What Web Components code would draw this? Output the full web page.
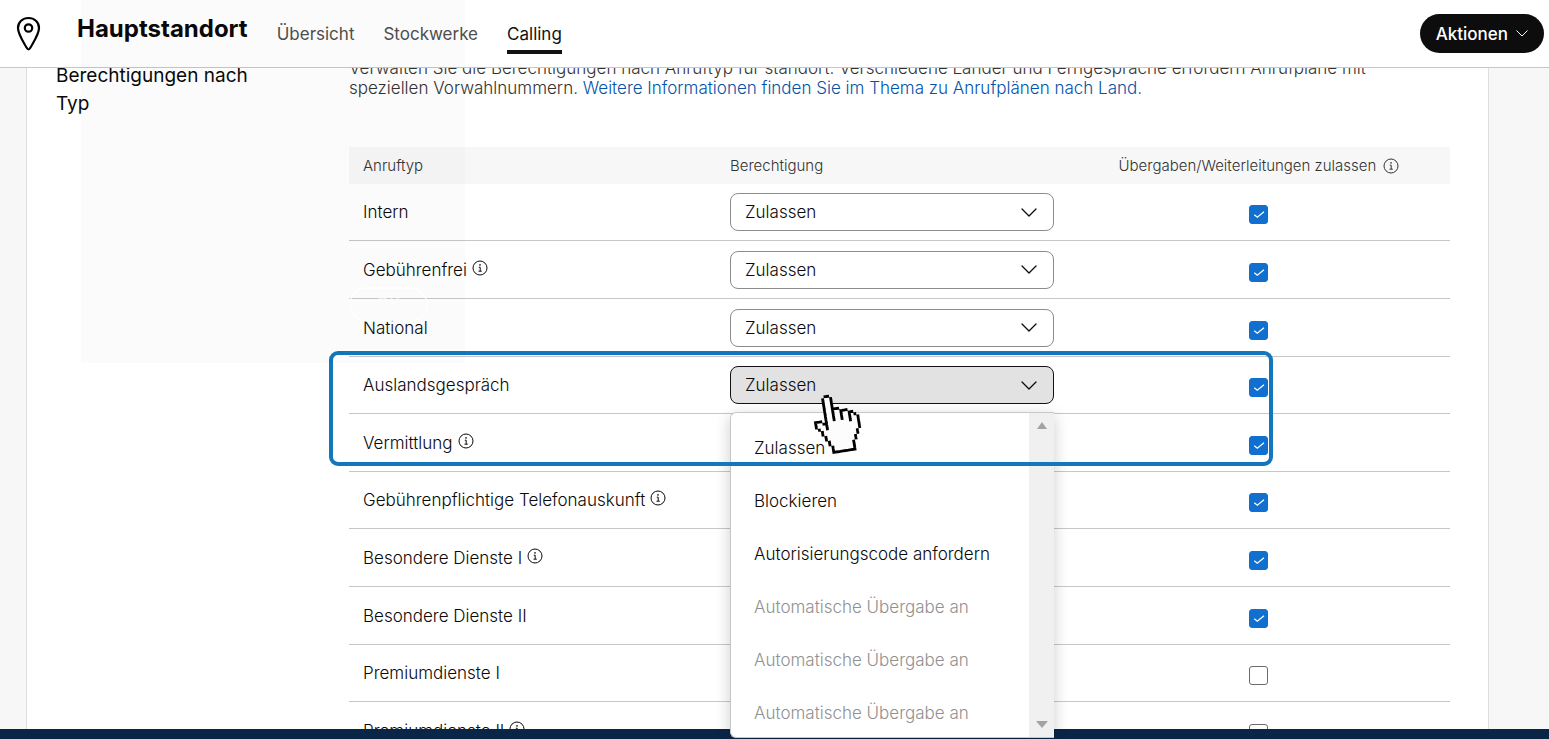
<!DOCTYPE html>
<html lang="de">
<head>
<meta charset="utf-8">
<title>Hauptstandort – Calling</title>
<style>
  html, body { margin: 0; height: 100%; }
  body { font-family: Inter, "Liberation Sans", sans-serif; font-size: 17px; font-weight: 300; color: #0a0a0a; background: #f7f7f7; overflow: hidden; }
</style>
</head>
<body>
<calling-page></calling-page>

<script>
function define(name, html, setup) {
  const tpl = document.createElement('template');
  tpl.innerHTML = html;
  customElements.define(name, class extends HTMLElement {
    connectedCallback() {
      if (this.shadowRoot) return;
      this.attachShadow({ mode: 'open' }).append(tpl.content.cloneNode(true));
      if (setup) setup(this, this.shadowRoot);
    }
  });
}

define('info-icon', `
<style>:host { display: inline-block; width: 16px; height: 16px; } svg { display: block; }</style>
<svg width="16" height="16" viewBox="0 0 16 16" fill="none" stroke="currentColor" aria-hidden="true">
  <circle cx="8" cy="8" r="7"/><path d="M6.8 7.2H8.2V11M6.5 11.2H9.8"/><circle cx="8" cy="4.9" r=".8" fill="currentColor" stroke="none"/>
</svg>`);

define('chevron-icon', `
<style>:host { display: inline-block; } svg { display: block; width: 100%; }</style>
<svg viewBox="0 0 16 9" fill="none" stroke="currentColor" stroke-width="1.3" stroke-linecap="round" stroke-linejoin="round" aria-hidden="true"><path d="M1 1L8 8L15 1"/></svg>`);

define('hand-cursor', `
<style>:host { display: block; width: 56px; height: 65px; } svg { display: block; }</style>
<svg width="56" height="65" viewBox="-2 -1 20.8 24.2" aria-hidden="true"><g transform="rotate(-9 8.5 11)"></g></svg>`,
(el, root) => {
  const rows = [
    '.....XX', '....XooX', '....XooX', '....XooX', '....XooX', '....XooXXX', '....XooXooXXX', '....XooXooXooXX',
    '....XooXooXooXoX', 'XXX.XooXooXooXooX', 'XooXXooooooooXooX', 'XoooXoooooooooooX', '.XooXoooooooooooX',
    '..XoooooooooooooX', '..XooooooooooooX', '...XoooooooooooX', '...XooooooooooX', '....XoooooooooX',
    '....XooooooooX', '.....XoooooooX', '.....XoooooooX', '.....XXXXXXXXX'];
  const g = root.querySelector('g');
  let dark = '', light = '';
  rows.forEach((r, y) => [...r].forEach((c, x) => {
    const cell = 'M' + x + ' ' + y + 'h1.05v1.05h-1.05z';
    if (c === 'X') dark += cell;
    if (c === 'o') light += cell;
  }));
  g.innerHTML = '<path fill="#fcfcfc" d="' + light + '"/><path fill="#000" d="' + dark + '"/>';
});

define('nav-tab', `
<style>
  :host { display: block; font-weight: 400; }
  a { display: block; color: #4f4f4f; text-decoration: none; line-height: 24px; padding-bottom: 4px; border-bottom: 4px solid transparent; }
  :host([active]) a { color: #121212; border-color: #121212; }
</style>
<a href="#"><slot></slot></a>`);

define('page-header', `
<style>
  :host { display: flex; align-items: center; height: 67px; flex: none; box-sizing: content-box; padding: 0 5px 0 16px; background: #fff; border-bottom: 1px solid #c7c7c7; position: relative; z-index: 3; }
  .pin { display: block; width: 26px; height: 36px; margin-right: 35px; }
  h1 { margin: 0 29px 10px 0; font-size: 24px; line-height: 32px; font-weight: 700; }
  nav { display: flex; gap: 29px; flex: 1; padding-top: 8px; }
  button { display: flex; align-items: center; gap: 8px; height: 39px; padding: 0 16px; border: 0; border-radius: 20px; background: #0d0d0d; color: #fff; font: 500 17px/24px Inter, sans-serif; }
  chevron-icon { width: 12px; }
</style>
<svg class="pin" viewBox="0 0 26 36" fill="none" stroke="#000" stroke-width="2.2" stroke-linejoin="round" aria-hidden="true">
  <path d="M12.5 33.5C11.4 33.5 10.9 32.2 10.2 31C6 23.600 2 17.500 2 11.900C2 6 6.700 2 12.500 2S23 6 23 11.900C23 17.500 19 23.600 14.800 31C14.100 32.200 13.600 33.500 12.500 33.500Z"/><circle cx="12.500" cy="12" r="3.700"/>
</svg>
<h1>Hauptstandort</h1>
<nav><nav-tab>Übersicht</nav-tab><nav-tab>Stockwerke</nav-tab><nav-tab active>Calling</nav-tab></nav>
<button type="button">Aktionen <chevron-icon></chevron-icon></button>`);

define('check-box', `
<style>
  :host { display: inline-block; width: 19px; height: 19px; vertical-align: middle; }
  label { display: grid; }
  input, svg { grid-area: 1 / 1; }
  input { appearance: none; margin: 0; width: 19px; height: 19px; box-sizing: border-box; border: 1px solid #6b6b6b; border-radius: 3px; background: #fff; }
  input:checked { background: #1170cf; border-color: #1170cf; }
  svg { pointer-events: none; visibility: hidden; }
  input:checked + svg { visibility: visible; }
</style>
<label><input type="checkbox"><svg width="19" height="19" viewBox="0 0 19 19" fill="none" stroke="#fff" stroke-width="1.200" aria-hidden="true"><path d="M5.300 9.700L8.300 12.300L15 6.800"/></svg></label>`,
(el, root) => {
  const input = root.querySelector('input');
  input.checked = el.hasAttribute('checked');
  input.setAttribute('aria-label', el.getAttribute('name'));
});

define('option-menu', `
<style>
  :host { display: flex; box-sizing: border-box; height: 326px; background: #fff; border: solid #c7c7c7; border-width: 1px 0 1px 1px; border-radius: 6px 0 0 6px; box-shadow: 0 4px 16px rgba(0,0,0,.2); overflow: hidden; }
  ul { list-style: none; margin: 0; padding: 9px 0 0; flex: 1; }
  li { height: 53px; line-height: 53px; padding-left: 23px; white-space: nowrap; }
  li[aria-disabled] { color: #919191; }
  .bar { width: 25px; background: #f0f0f0; display: flex; flex-direction: column; justify-content: space-between; align-items: center; padding: 9px 0; box-sizing: border-box; }
  svg { display: block; }
</style>
<ul role="listbox" aria-label="Berechtigung">
  <li role="option" aria-selected="true">Zulassen</li>
  <li role="option">Blockieren</li>
  <li role="option">Autorisierungscode anfordern</li>
  <li role="option" aria-disabled="true">Automatische Übergabe an</li>
  <li role="option" aria-disabled="true">Automatische Übergabe an</li>
  <li role="option" aria-disabled="true">Automatische Übergabe an</li>
</ul>
<div class="bar" aria-hidden="true">
  <svg width="10" height="7"><path d="M0 7L5 0L10 7Z" fill="#a3a3a3"/></svg>
  <svg width="12" height="7"><path d="M0 0H12L6 7Z" fill="#a3a3a3"/></svg>
</div>`);

define('permission-select', `
<style>
  :host { display: block; position: relative; }
  .field { display: grid; align-items: center; }
  select, chevron-icon { grid-area: 1 / 1; }
  select { appearance: none; width: 100%; height: 38px; box-sizing: border-box; margin: 0; padding: 0 14px; border: 1px solid #8c8c8c; border-radius: 8px; background: #fff; color: #0a0a0a; font: inherit; }
  chevron-icon { width: 16px; justify-self: end; margin-right: 17px; pointer-events: none; }
  :host([open]) select { background: #e2e2e2; border-color: #121212; }
  option-menu, hand-cursor { position: absolute; }
  option-menu { top: 46px; left: 0; right: 0; z-index: 2; }
  hand-cursor { top: 25px; left: 79px; z-index: 5; }
</style>
<div class="field"><select><option>Zulassen</option><option>Blockieren</option><option>Autorisierungscode anfordern</option></select><chevron-icon></chevron-icon></div>`,
(el, root) => {
  root.querySelector('select').setAttribute('aria-label', el.getAttribute('name'));
  if (el.hasAttribute('open')) root.append(document.createElement('option-menu'), document.createElement('hand-cursor'));
});

define('permission-table', `
<style>
  :host { display: block; position: relative; }
  table { width: 100%; table-layout: fixed; border-collapse: separate; border-spacing: 0; }
  th { height: 37px; padding: 0 30px 0 14px; background: #f7f7f7; color: #333; font-size: 15px; line-height: 20px; font-weight: 300; text-align: left; white-space: nowrap; }
  td { box-sizing: border-box; height: 58px; padding: 0 29px 0 14px; border-bottom: 1px solid #c7c7c7; white-space: nowrap; }
  tr:nth-child(5n+1) td, tr:nth-child(5n+4) td { height: 57px; }
  th:last-child, td:last-child { text-align: center; }
  td:last-child { padding-top: 4px; padding-right: 30px; }
  td info-icon { vertical-align: 0; margin-left: 5px; }
  th info-icon { vertical-align: -3px; margin-left: 2px; }
  .mark { position: absolute; z-index: 4; top: 204px; left: -20px; right: 177px; height: 115px; box-sizing: border-box; border: 4px solid #1277bd; border-radius: 9px; pointer-events: none; }
</style>
<table>
  <thead><tr><th>Anruftyp</th><th>Berechtigung</th><th>Übergaben/Weiterleitungen zulassen <info-icon></info-icon></th></tr></thead>
  <tbody></tbody>
</table>
<div class="mark"></div>`,
(el, root) => {
  const rows = [['Intern', 0, 1], ['Gebührenfrei', 1, 1], ['National', 0, 1], ['Auslandsgespräch', 0, 1, 'open'], ['Vermittlung', 1, 1],
    ['Gebührenpflichtige Telefonauskunft', 1, 1], ['Besondere Dienste I', 1, 1], ['Besondere Dienste II', 0, 1], ['Premiumdienste I', 0, 0], ['Premiumdienste II', 1, 0]];
  root.querySelector('tbody').innerHTML = rows.map(([name, info, on, open = '']) =>
    `<tr><td>${name}${info ? '<info-icon></info-icon>' : ''}</td>
     <td><permission-select name="${name}" ${open}></permission-select></td>
     <td><check-box name="${name}" ${on ? 'checked' : ''}></check-box></td></tr>`).join('');
});

define('settings-section', `
<style>
  :host { display: flex; margin-top: -10px; }
  h2 { box-sizing: border-box; width: 293px; flex: none; margin: 0; padding: 4px 80px 0 0; font-size: 19px; line-height: 28px; font-weight: 400; }
  .body { flex: 1; min-width: 0; }
  p { margin: 0 0 49px; max-width: 1040px; line-height: 20px; color: #333; }
  a { color: #0353a8; text-decoration: none; }
</style>
<h2>Berechtigungen nach Typ</h2>
<div class="body">
  <p>Verwalten Sie die Berechtigungen nach Anruftyp für standort. Verschiedene Länder und Ferngespräche erfordern Anrufpläne mit speziellen Vorwahlnummern. <a href="#">Weitere Informationen finden Sie im Thema zu Anrufplänen nach Land.</a></p>
  <permission-table></permission-table>
</div>`);

define('faded-dialog', `
<style>
  :host { display: flex; flex-direction: column; box-sizing: border-box; position: absolute; z-index: 6; top: 0; left: 81px; width: 384px; height: 363px; padding: 0 37px 41px 0; align-items: flex-end; justify-content: flex-end; background: rgba(0,0,0,.014); pointer-events: none; }
  span { box-sizing: border-box; width: 79px; height: 35px; border: 2px solid rgba(255,255,255,.7); border-radius: 18px; color: rgba(255,255,255,.7); line-height: 31px; text-align: center; font-weight: 400; }
</style>
<span>OK</span>`);

define('calling-page', `
<style>
  :host { display: flex; flex-direction: column; height: 100vh; position: relative; overflow: hidden; }
  main { flex: 1; min-height: 0; margin: 0 60px 0 26px; padding: 0 38px 0 29px; background: #fff; border: solid #dedede; border-width: 0 1px; }
  footer { flex: none; height: 10px; background: #0a2647; position: relative; z-index: 1; }
</style>
<page-header></page-header>
<main><settings-section></settings-section></main>
<footer></footer>
<faded-dialog></faded-dialog>`);
</script>
</body>
</html>
